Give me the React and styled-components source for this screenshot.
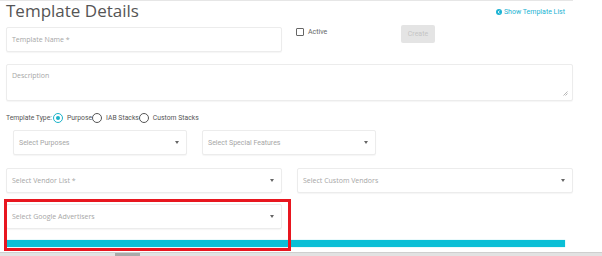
import styled, { createGlobalStyle } from "styled-components";

const Global = createGlobalStyle`
  html, body {
    margin: 0;
    background: #fff;
    font-family: "Open Sans", "Liberation Sans", sans-serif;
    overflow: hidden;
  }
`;

const Shell = styled.div`
  width: 602px;
  height: 256px;
  position: relative;
  overflow: hidden;
`;

const Page = styled.div`
  width: 573px;
  box-sizing: border-box;
  padding-left: 6px;
  border-top: 1px solid #e6e6e6;
`;

const Header = styled.div`
  display: flex;
  justify-content: space-between;
  align-items: flex-start;
  padding-right: 8px;
  height: 22px;
`;

const Title = styled.h1`
  margin: 0;
  font-size: 17px;
  line-height: 20px;
  font-weight: 400;
  color: #555;
`;

const ListLink = styled.a`
  display: flex;
  align-items: center;
  gap: 2px;
  margin-top: 7px;
  font-family: Roboto, "Liberation Sans", sans-serif;
  font-size: 7px;
  color: #1bb3d3;
  text-decoration: none;
`;

const Row = styled.div`
  display: flex;
  align-items: flex-start;
  gap: ${(p) => p.$gap || 0}px;
  margin-top: ${(p) => p.$top || 0}px;
  padding-left: ${(p) => p.$indent || 0}px;
`;

const Field = styled.div`
  width: ${(p) => p.$w}px;
  height: ${(p) => p.$h || 25}px;
  margin-top: ${(p) => p.$mt || 0}px;
  box-sizing: border-box;
  border: 1px solid #ececec;
  border-radius: 2px;
  box-shadow: 0 1px 1px rgba(0, 0, 0, 0.04);
  background: #fff;
  position: relative;
  display: flex;
  align-items: ${(p) => (p.$area ? "flex-start" : "center")};
  justify-content: space-between;
  padding: ${(p) => (p.$area ? "6px 5px" : "0 7px 0 5px")};
  font-family: ${(p) => (p.$roboto ? "Roboto, " : "")}"Open Sans", sans-serif;
  font-size: 7px;
  color: #a6a6a6;
`;

const Caret = styled.span`
  width: 0;
  height: 0;
  border-left: 2.5px solid transparent;
  border-right: 2.5px solid transparent;
  border-top: 3px solid #666;
`;

const Grip = styled.svg`
  position: absolute;
  right: 4px;
  bottom: 4px;
`;

const Aside = styled.div`
  width: 119px;
  box-sizing: border-box;
  padding: 3px 0 0 14px;
`;

const Check = styled.label`
  display: flex;
  align-items: center;
  gap: 4px;
  font-family: Roboto, "Liberation Sans", sans-serif;
  font-size: 7px;
  color: #666;
`;

const Box = styled.span`
  width: 6px;
  height: 6px;
  border: 1px solid #666;
  border-radius: 1px;
`;

const Button = styled.button`
  width: 34px;
  height: 18px;
  border: none;
  border-radius: 2px;
  background: #e4e4e4;
  color: #c4c4c4;
  font-family: Roboto, "Liberation Sans", sans-serif;
  font-size: 7px;
  padding: 0;
`;

const TypeRow = styled.div`
  display: flex;
  align-items: center;
  height: 10px;
  margin-top: 12px;
  font-family: Roboto, "Liberation Sans", sans-serif;
  font-size: 6.8px;
  color: #555;
`;

const Radio = styled.span`
  width: 8px;
  height: 8px;
  border-radius: 50%;
  border: 1px solid ${(p) => (p.$on ? "#1bb3c9" : "#555")};
  display: inline-flex;
  align-items: center;
  justify-content: center;
  margin: 0 4px 0 ${(p) => p.$ml || 0}px;
  &::after {
    content: "";
    width: 4px;
    height: 4px;
    border-radius: 50%;
    background: ${(p) => (p.$on ? "#1bb3c9" : "transparent")};
  }
`;

const Bar = styled.div`
  width: 559px;
  height: 7px;
  margin-top: 11px;
  background: #0bbfd6;
  box-shadow: 0 0 1px #7fe0ec;
`;

const Scroll = styled.div`
  position: absolute;
  left: 0;
  right: 0;
  bottom: 0;
  height: 3px;
  background: #e2e2e2;
  border-top: 1px solid #cfcfcf;
  &::after {
    content: "";
    position: absolute;
    left: 115px;
    width: 25px;
    top: 0;
    height: 3px;
    background: #a9a9a9;
  }
`;

const Highlight = styled.div`
  position: absolute;
  left: 4px;
  top: 199px;
  width: 287px;
  height: 52px;
  box-sizing: border-box;
  border: 3px solid #e8161f;
  pointer-events: none;
`;

const Select = ({ w, children, roboto }) => (
  <Field $w={w} $roboto={roboto}>
    <span>{children}</span>
    <Caret />
  </Field>
);

export default function App() {
  return (
    <Shell>
      <Global />
      <Page>
        <Header>
          <Title>Template Details</Title>
          <ListLink href="#">
            <svg width="6" height="6" viewBox="0 0 10 10">
              <circle cx="5" cy="5" r="5" fill="#1bb3d3" />
              <path d="M6 2.6 L3.6 5 L6 7.4" stroke="#fff" strokeWidth="1.6" fill="none" />
            </svg>
            Show Template List
          </ListLink>
        </Header>

        <Row $top={2}>
          <Field $w={276} $mt={2}>
            <span>Template Name *</span>
          </Field>
          <Aside>
            <Check>
              <Box />
              Active
            </Check>
          </Aside>
          <Button>Create</Button>
        </Row>

        <Row $top={12}>
          <Field $w={567} $h={37} $area>
            <span>Description</span>
            <Grip width="5" height="5" viewBox="0 0 5 5">
              <path d="M0.5 4.5 L4.5 0.5 M2.5 4.5 L4.5 2.5" stroke="#999" strokeWidth="0.7" />
            </Grip>
          </Field>
        </Row>

        <TypeRow>
          Template Type:
          <Radio $on $ml={1} />
          Purpose
          <Radio />
          IAB Stacks
          <Radio />
          Custom Stacks
        </TypeRow>

        <Row $top={7} $indent={7} $gap={15}>
          <Select w={174} roboto>Select Purposes</Select>
          <Select w={174} roboto>Select Special Features</Select>
        </Row>

        <Row $top={13} $gap={15}>
          <Select w={276}>Select Vendor List *</Select>
          <Select w={276}>Select Custom Vendors</Select>
        </Row>

        <Row $top={11}>
          <Select w={276}>Select Google Advertisers</Select>
        </Row>

        <Bar />
      </Page>
      <Highlight />
      <Scroll />
    </Shell>
  );
}
